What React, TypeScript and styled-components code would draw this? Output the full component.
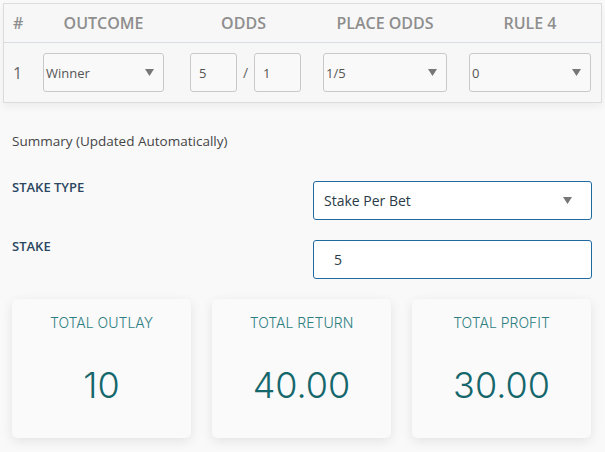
import styled, { createGlobalStyle } from "styled-components"

const GlobalStyle = createGlobalStyle`
    html, body {
        margin: 0;
        padding: 0;
        background: #f9f9f9;
        font-family: "Open Sans", "Liberation Sans", sans-serif;
    }
    * { box-sizing: border-box; }
`

const Caret = () => (
    <svg width="9" height="7" viewBox="0 0 9 7">
        <path d="M0 0 H9 L4.5 7 Z" fill="#777" />
    </svg>
)

const columns = ["#", "OUTCOME", "ODDS", "PLACE ODDS", "RULE 4"]

const cards = [
    { label: "TOTAL OUTLAY", value: "10" },
    { label: "TOTAL RETURN", value: "40.00" },
    { label: "TOTAL PROFIT", value: "30.00" },
]

const App = () => {
    return (
        <Page>
            <GlobalStyle />
            <Table>
                <HeadRow>
                    {columns.map((c) => (
                        <HeadCell key={c}>{c}</HeadCell>
                    ))}
                </HeadRow>
                <BodyRow>
                    <Index>1</Index>
                    <SmallSelect>
                        <span>Winner</span>
                        <Caret />
                    </SmallSelect>
                    <Odds>
                        <OddsInput>5</OddsInput>
                        <Slash>/</Slash>
                        <OddsInput>1</OddsInput>
                    </Odds>
                    <SmallSelect>
                        <span>1/5</span>
                        <Caret />
                    </SmallSelect>
                    <SmallSelect>
                        <span>0</span>
                        <Caret />
                    </SmallSelect>
                </BodyRow>
            </Table>

            <Summary>
                <SummaryTitle>Summary (Updated Automatically)</SummaryTitle>
                <FieldRow>
                    <Label>STAKE TYPE</Label>
                    <Control>
                        <span>Stake Per Bet</span>
                        <Caret />
                    </Control>
                </FieldRow>
                <FieldRow>
                    <Label>STAKE</Label>
                    <Control $indent>
                        <span>5</span>
                    </Control>
                </FieldRow>
            </Summary>

            <Cards>
                {cards.map((c) => (
                    <Card key={c.label}>
                        <CardLabel>{c.label}</CardLabel>
                        <CardValue>{c.value}</CardValue>
                    </Card>
                ))}
            </Cards>
        </Page>
    )
}

const Page = styled.div`
    width: 605px;
    height: 452px;
    padding: 3px 3px 0;
    overflow: hidden;
`

const Table = styled.div`
    border: 1px solid #dcdcdc;
    background: #f7f7f7;
    box-shadow: 0 4px 8px rgba(0, 0, 0, 0.05);
`

const rowGrid = `
    display: grid;
    grid-template-columns: 8px 121px 115px 124px 122px;
    column-gap: 22px;
    align-items: center;
    padding-left: 9px;
`

const HeadRow = styled.div`
    ${rowGrid}
    height: 39px;
    border-bottom: 1px solid #d8dde3;
`

const HeadCell = styled.div`
    text-align: center;
    font-weight: 600;
    font-size: 16px;
    color: #8e8e8e;
    white-space: nowrap;
`

const BodyRow = styled.div`
    ${rowGrid}
    height: 59px;
`

const Index = styled.div`
    font-size: 16px;
    color: #666;
`

const SmallSelect = styled.div`
    display: flex;
    justify-content: space-between;
    align-items: center;
    height: 39px;
    padding: 0 9px 0 2px;
    border: 1px solid #c9c9c9;
    border-radius: 3px;
    background: #f9f9f9;
    font-size: 13px;
    color: #555;
`

const Odds = styled.div`
    display: flex;
    align-items: center;
    padding-left: 4px;
`

const OddsInput = styled.div`
    display: flex;
    align-items: center;
    width: 47px;
    height: 39px;
    padding-left: 8px;
    border: 1px solid #c9c9c9;
    border-radius: 3px;
    background: #f9f9f9;
    font-size: 13px;
    color: #555;
`

const Slash = styled.span`
    width: 17px;
    text-align: center;
    font-size: 14px;
    color: #666;
`

const Summary = styled.div`
    padding: 29px 10px 0 9px;
`

const SummaryTitle = styled.div`
    font-size: 13.5px;
    color: #454545;
    margin-bottom: 31px;
`

const FieldRow = styled.div`
    display: grid;
    grid-template-columns: 301px 279px;
    margin-bottom: 20px;
`

const Label = styled.div`
    font-size: 13px;
    font-weight: 600;
    line-height: 1;
    color: #2a4661;
`

const Control = styled.div<{ $indent?: boolean }>`
    display: flex;
    justify-content: space-between;
    align-items: center;
    height: 39px;
    padding: 0 19px 0 ${(p) => (p.$indent ? "20px" : "10px")};
    border: 1px solid #1f6aa0;
    border-radius: 3px;
    background: #fff;
    font-size: 14px;
    color: #2b3a48;
`

const Cards = styled.div`
    display: grid;
    grid-template-columns: repeat(3, 179px);
    column-gap: 21px;
    padding-left: 9px;
    margin-top: 4px;
`

const Card = styled.div`
    height: 139px;
    border-radius: 5px;
    background: #fafafa;
    box-shadow: 0 3px 12px rgba(0, 0, 0, 0.09);
    text-align: center;
    font-family: Inter, "Liberation Sans", sans-serif;
    font-weight: 300;
`

const CardLabel = styled.div`
    padding-top: 15px;
    font-size: 14px;
    color: #2f7f82;
`

const CardValue = styled.div`
    margin-top: 32px;
    font-size: 36px;
    color: #15676c;
`

export default App
